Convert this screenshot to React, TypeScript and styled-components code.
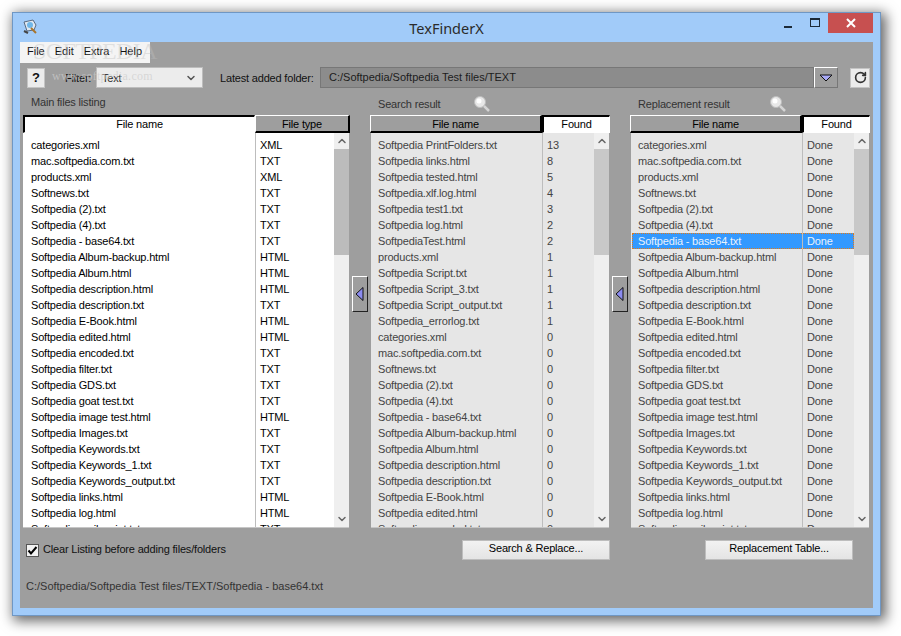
import React from 'react'
import styled, { createGlobalStyle } from 'styled-components'
import { ChevronUp, ChevronDown, RotateCw } from 'lucide-react'

const mainFiles: [string, string][] = [
  ['categories.xml', 'XML'], ['mac.softpedia.com.txt', 'TXT'], ['products.xml', 'XML'], ['Softnews.txt', 'TXT'],
  ['Softpedia (2).txt', 'TXT'], ['Softpedia (4).txt', 'TXT'], ['Softpedia - base64.txt', 'TXT'],
  ['Softpedia Album-backup.html', 'HTML'], ['Softpedia Album.html', 'HTML'], ['Softpedia description.html', 'HTML'],
  ['Softpedia description.txt', 'TXT'], ['Softpedia E-Book.html', 'HTML'], ['Softpedia edited.html', 'HTML'],
  ['Softpedia encoded.txt', 'TXT'], ['Softpedia filter.txt', 'TXT'], ['Softpedia GDS.txt', 'TXT'],
  ['Softpedia goat test.txt', 'TXT'], ['Softpedia image test.html', 'HTML'], ['Softpedia Images.txt', 'TXT'],
  ['Softpedia Keywords.txt', 'TXT'], ['Softpedia Keywords_1.txt', 'TXT'], ['Softpedia Keywords_output.txt', 'TXT'],
  ['Softpedia links.html', 'HTML'], ['Softpedia log.html', 'HTML'], ['Softpedia mail script.txt', 'TXT'],
]

const searchFiles: [string, string][] = [
  ['Softpedia PrintFolders.txt', '13'], ['Softpedia links.html', '8'], ['Softpedia tested.html', '5'],
  ['Softpedia.xlf.log.html', '4'], ['Softpedia test1.txt', '3'], ['Softpedia log.html', '2'],
  ['SoftpediaTest.html', '2'], ['products.xml', '1'], ['Softpedia Script.txt', '1'], ['Softpedia Script_3.txt', '1'],
  ['Softpedia Script_output.txt', '1'], ['Softpedia_errorlog.txt', '1'], ['categories.xml', '0'],
  ['mac.softpedia.com.txt', '0'], ['Softnews.txt', '0'], ['Softpedia (2).txt', '0'], ['Softpedia (4).txt', '0'],
  ['Softpedia - base64.txt', '0'], ['Softpedia Album-backup.html', '0'], ['Softpedia Album.html', '0'],
  ['Softpedia description.html', '0'], ['Softpedia description.txt', '0'], ['Softpedia E-Book.html', '0'],
  ['Softpedia edited.html', '0'], ['Softpedia encoded.txt', '0'],
]

const GlobalStyle = createGlobalStyle`
  html, body {
    margin: 0;
    background: #fff;
  }
  body {
    font-family: "Liberation Sans", Arial, sans-serif;
    font-size: 11px;
    letter-spacing: -0.18px;
  }
`

const Page = styled.div`
  width: 901px;
  height: 636px;
  padding: 12px 0 0 12px;
  box-sizing: border-box;
  overflow: hidden;
`

const Win = styled.div`
  width: 869px;
  height: 604px;
  box-sizing: border-box;
  border: 1px solid #6f97c4;
  background: #a1cbf9;
  box-shadow: 3px 3px 12px 2px rgba(0, 0, 0, 0.6);
  padding: 0 7px 7px 7px;
  display: flex;
  flex-direction: column;
`

const TitleBar = styled.div`
  height: 29px;
  flex: none;
  display: grid;
  grid-template-columns: 1fr auto 1fr;
`

const AppIcon = styled.svg`
  width: 16px;
  height: 16px;
  margin: 6px 0 0 2px;
`

const Title = styled.div`
  font-family: "Noto Sans", sans-serif;
  font-size: 14.5px;
  letter-spacing: 0;
  color: #2b2b2b;
  line-height: 30px;
`

const Controls = styled.div`
  display: flex;
  justify-content: flex-end;
  align-items: flex-start;
`

const CtrlBtn = styled.div<{ w: number }>`
  width: ${p => p.w}px;
  height: 20px;
  display: flex;
  align-items: center;
  justify-content: center;
`

const MinGlyph = styled.div`
  width: 8px;
  height: 2px;
  background: #1c2a38;
  margin-top: 8px;
`

const MaxGlyph = styled.div`
  width: 8px;
  height: 6px;
  border: 1px solid #1c2a38;
  border-top-width: 2px;
  margin-top: -1px;
`

const CloseBtn = styled(CtrlBtn)`
  background: #c75050;
  color: #fff;
`

const Client = styled.div`
  position: relative;
  flex: 1;
  background: #9e9e9e;
  color: #111;
  overflow: hidden;
`

const MenuBar = styled.div`
  width: 130px;
  height: 21px;
  background: #f4f4f4;
  display: flex;
  gap: 10px;
  align-items: center;
  padding: 0 0 4px 7px;
  box-sizing: border-box;
  letter-spacing: 0;
`

const Toolbar = styled.div`
  height: 21px;
  margin-top: 4px;
  display: flex;
  align-items: center;
  padding-left: 7px;
  white-space: nowrap;
`

const HelpBtn = styled.div`
  width: 18px;
  height: 20px;
  background: #ececec;
  border: 1px solid #c4c4c4;
  box-sizing: border-box;
  font-weight: bold;
  font-size: 13px;
  display: flex;
  align-items: center;
  justify-content: center;
`

const FilterLabel = styled.span`
  margin-left: 20px;
  width: 31px;
`

const SelectBox = styled.div`
  width: 107px;
  height: 21px;
  background: #ececec;
  border: 1px solid #bdbdbd;
  box-sizing: border-box;
  display: flex;
  align-items: center;
  justify-content: space-between;
  padding: 0 5px;
  color: #222;
`

const FolderLabel = styled.span`
  margin-left: 17px;
  width: 100px;
`

const PathField = styled.div`
  width: 494px;
  height: 21px;
  background: #8c8c8c;
  border: 1px solid #777;
  box-sizing: border-box;
  padding-left: 8px;
  line-height: 18px;
  color: #1c1c1c;
  letter-spacing: 0;
`

const PathDrop = styled.div`
  width: 24px;
  height: 21px;
  box-sizing: border-box;
  border-top: 1px solid #fff;
  border-left: 1px solid #fff;
  border-right: 1px solid #777;
  border-bottom: 1px solid #777;
  display: flex;
  align-items: center;
  justify-content: center;
`

const RefreshBtn = styled.div`
  width: 20px;
  height: 20px;
  margin-left: 12px;
  background: #ececec;
  border: 1px solid #c4c4c4;
  box-sizing: border-box;
  display: flex;
  align-items: center;
  justify-content: center;
  color: #333;
`

const Panels = styled.div`
  display: flex;
  padding-left: 3px;
`

const Panel = styled.div<{ w: number }>`
  width: ${p => p.w}px;
  flex: none;
`

const PanelLabel = styled.div<{ up?: boolean }>`
  height: 27px;
  box-sizing: border-box;
  padding: ${p => (p.up ? '8px' : '10px')} 0 0 8px;
  display: flex;
  color: #333;
`

const LabelText = styled.span<{ w?: number }>`
  width: ${p => (p.w ? `${p.w}px` : 'auto')};
`

const Lens = styled.svg`
  width: 18px;
  height: 18px;
  margin-top: -3px;
`

const HeaderRow = styled.div`
  display: flex;
  height: 18px;
`

const HeadCell = styled.div<{ w: number; active?: boolean }>`
  width: ${p => p.w}px;
  flex: none;
  box-sizing: border-box;
  text-align: center;
  line-height: 16px;
  color: #000;
  background: ${p => (p.active ? '#fff' : '#9e9e9e')};
  border-style: solid;
  border-width: 1px 2px 2px 1px;
  border-color: #fff #000 #000 #fff;
  ${p => p.active && 'border-width: 2px 1px 1px 2px; border-color: #000 #fff #fff #000; line-height: 14px;'}
`

const ListBody = styled.div<{ dim?: boolean; w: number }>`
  position: relative;
  width: ${p => p.w}px;
  height: 395px;
  box-sizing: border-box;
  margin-left: ${p => (p.dim ? 1 : 0)}px;
  background: ${p => (p.dim ? '#e6e6e6' : '#fff')};
  color: ${p => (p.dim ? '#444' : '#000')};
  border-bottom: 1px solid #c6c6c6;
  display: flex;
  overflow: hidden;
`

const Rows = styled.div`
  flex: 1;
  padding-top: 4px;
`

const Row = styled.div<{ selected?: boolean }>`
  display: flex;
  height: 16px;
  line-height: 16px;
  box-sizing: border-box;
  white-space: nowrap;
  ${p => p.selected && 'background: #3399ff; color: #e9f2fb; border: 1px dotted #e07b1a; line-height: 14px; margin-left: 1px;'}
`

const NameCell = styled.div<{ w: number; pad: number }>`
  width: ${p => p.w}px;
  flex: none;
  padding-left: ${p => p.pad}px;
  box-sizing: border-box;
  overflow: hidden;
`

const ValueCell = styled.div`
  flex: 1;
  padding-left: 5px;
`

const ColumnLine = styled.div<{ x: number }>`
  position: absolute;
  top: 0;
  bottom: 0;
  left: ${p => p.x}px;
  width: 1px;
  background: #bdbdbd;
`

const ScrollBar = styled.div`
  width: 15px;
  flex: none;
  background: #efefef;
  display: flex;
  flex-direction: column;
  align-items: center;
  color: #666;
  position: relative;
  z-index: 1;
`

const ScrollArrow = styled.span<{ end?: boolean }>`
  height: 16px;
  display: flex;
  align-items: center;
  justify-content: center;
  ${p => p.end && 'margin-top: auto;'}
`

const Thumb = styled.div<{ tone: string }>`
  width: 15px;
  height: 106px;
  background: ${p => p.tone};
`

const ArrowColumn = styled.div`
  width: 20px;
  flex: none;
  padding: 188px 0 0 2px;
  box-sizing: border-box;
`

const ArrowBtn = styled.div`
  width: 16px;
  height: 36px;
  box-sizing: border-box;
  border-top: 1px solid #fff;
  border-left: 1px solid #fff;
  border-right: 1px solid #222;
  border-bottom: 1px solid #222;
  display: flex;
  align-items: center;
  justify-content: flex-start;
  padding-left: 1px;
`

const Footer = styled.div`
  display: flex;
  height: 32px;
  padding-left: 6px;
  align-items: flex-start;
`

const CheckWrap = styled.label`
  width: 436px;
  flex: none;
  display: flex;
  gap: 4px;
  margin-top: 16px;
  line-height: 11px;
  color: #111;
`

const CheckBox = styled.div`
  width: 13px;
  height: 13px;
  box-sizing: border-box;
  background: #f2f2f2;
  border: 1px solid #555;
  display: flex;
  align-items: center;
  justify-content: center;
`

const FootBtn = styled.div<{ gap: number }>`
  width: 148px;
  height: 20px;
  flex: none;
  margin: 12px 0 0 ${p => p.gap}px;
  background: linear-gradient(#f2f2f2, #e4e4e4);
  border: 1px solid #bdbdbd;
  box-sizing: border-box;
  text-align: center;
  line-height: 14px;
  color: #000;
`

const Status = styled.div`
  margin: 20px 0 0 6px;
  color: #333;
  letter-spacing: 0;
`

const Watermark = styled.div`
  position: absolute;
  left: 13px;
  top: -4px;
  font-family: "Liberation Serif", serif;
  font-size: 24px;
  letter-spacing: -0.6px;
  color: rgba(190, 190, 190, 0.4);
  pointer-events: none;
  white-space: nowrap;
`

const WatermarkUrl = styled.div`
  position: absolute;
  left: 32px;
  top: 27px;
  font-family: "Liberation Serif", serif;
  font-size: 12px;
  letter-spacing: 0.3px;
  color: rgba(205, 205, 205, 0.7);
  pointer-events: none;
  white-space: nowrap;
`

const LeftTriangle = () => (
  <svg width="11" height="16" viewBox="0 0 11 16">
    <path d="M9 1.5 L2 8 L9 14.5 Z" fill="#8b8bf0" stroke="#111" strokeWidth="1" />
  </svg>
)

const LensIcon = () => (
  <Lens viewBox="0 0 18 18">
    <circle cx="7" cy="7" r="5.5" fill="#e8e8e8" stroke="#bdbdbd" />
    <circle cx="6" cy="6" r="2.5" fill="#fff" />
    <path d="M11 11 L16 16" stroke="#d4d4d4" strokeWidth="2.5" />
  </Lens>
)

const VScroll = ({ tone }: { tone: string }) => (
  <ScrollBar>
    <ScrollArrow><ChevronUp size={12} strokeWidth={3} /></ScrollArrow>
    <Thumb tone={tone} />
    <ScrollArrow end><ChevronDown size={12} strokeWidth={3} /></ScrollArrow>
  </ScrollBar>
)

interface ListProps {
  rows: [string, string][]
  width: number
  nameW: number
  pad: number
  dim?: boolean
  selected?: number
  tone: string
}

const FileList: React.FC<ListProps> = ({ rows, width, nameW, pad, dim, selected, tone }) => (
  <ListBody w={width} dim={dim}>
    <ColumnLine x={nameW} />
    <Rows>
      {rows.map((r, i) => (
        <Row key={r[0] + i} selected={selected === i}>
          <NameCell w={selected === i ? nameW - 2 : nameW} pad={selected === i ? pad - 2 : pad}>{r[0]}</NameCell>
          <ValueCell>{r[1]}</ValueCell>
        </Row>
      ))}
    </Rows>
    <VScroll tone={tone} />
  </ListBody>
)

const App: React.FC = () => {
  const done = mainFiles.map(f => [f[0], 'Done'] as [string, string])
  return (
    <Page>
      <GlobalStyle />
      <Win>
        <TitleBar>
          <AppIcon viewBox="0 0 16 16">
            <path d="M2 3 L11 1 L14 6 L12 11 L5 12 Z" fill="#dfe8f2" stroke="#5a6a80" />
            <circle cx="8" cy="6" r="3" fill="#6fb6e8" />
            <path d="M9 9 L14 14" stroke="#a8742c" strokeWidth="2" />
            <path d="M2 12 L6 14" stroke="#444" strokeWidth="2" />
          </AppIcon>
          <Title>TexFinderX</Title>
          <Controls>
            <CtrlBtn w={26}><MinGlyph /></CtrlBtn>
            <CtrlBtn w={27}><MaxGlyph /></CtrlBtn>
            <CloseBtn w={45}>
              <svg width="10" height="10" viewBox="0 0 10 10">
                <path d="M1 1 L9 9 M9 1 L1 9" stroke="#fff" strokeWidth="2" />
              </svg>
            </CloseBtn>
          </Controls>
        </TitleBar>
        <Client>
          <MenuBar>
            <span>File</span>
            <span>Edit</span>
            <span>Extra</span>
            <span>Help</span>
          </MenuBar>
          <Toolbar>
            <HelpBtn>?</HelpBtn>
            <FilterLabel>Filter:</FilterLabel>
            <SelectBox>
              Text
              <ChevronDown size={12} strokeWidth={3} color="#555" />
            </SelectBox>
            <FolderLabel>Latest added folder:</FolderLabel>
            <PathField>C:/Softpedia/Softpedia Test files/TEXT</PathField>
            <PathDrop>
              <svg width="14" height="8" viewBox="0 0 14 8">
                <path d="M1 1 H13 L7 7 Z" fill="#a9a9f5" stroke="#111" />
              </svg>
            </PathDrop>
            <RefreshBtn><RotateCw size={13} strokeWidth={3} /></RefreshBtn>
          </Toolbar>
          <Panels>
            <Panel w={327}>
              <PanelLabel up>Main files listing</PanelLabel>
              <HeaderRow>
                <HeadCell w={232} active>File name</HeadCell>
                <HeadCell w={95}>File type</HeadCell>
              </HeaderRow>
              <FileList rows={mainFiles} width={326} nameW={232} pad={8} tone="#bcbcbc" />
            </Panel>
            <ArrowColumn><ArrowBtn><LeftTriangle /></ArrowBtn></ArrowColumn>
            <Panel w={240}>
              <PanelLabel>
                <LabelText w={95}>Search result</LabelText>
                <LensIcon />
              </PanelLabel>
              <HeaderRow>
                <HeadCell w={172}>File name</HeadCell>
                <HeadCell w={68} active>Found</HeadCell>
              </HeaderRow>
              <FileList rows={searchFiles} width={238} nameW={171} pad={7} dim tone="#c8c8c8" />
            </Panel>
            <ArrowColumn><ArrowBtn><LeftTriangle /></ArrowBtn></ArrowColumn>
            <Panel w={240}>
              <PanelLabel>
                <LabelText w={131}>Replacement result</LabelText>
                <LensIcon />
              </PanelLabel>
              <HeaderRow>
                <HeadCell w={172}>File name</HeadCell>
                <HeadCell w={68} active>Found</HeadCell>
              </HeaderRow>
              <FileList rows={done} width={238} nameW={171} pad={7} dim selected={6} tone="#c8c8c8" />
            </Panel>
          </Panels>
          <Footer>
            <CheckWrap>
              <CheckBox>
                <svg width="11" height="11" viewBox="0 0 11 11">
                  <path d="M1.5 5.5 L4 8.5 L9.5 2" fill="none" stroke="#000" strokeWidth="2" />
                </svg>
              </CheckBox>
              Clear Listing before adding files/folders
            </CheckWrap>
            <FootBtn gap={0}>Search &amp; Replace...</FootBtn>
            <FootBtn gap={95}>Replacement Table...</FootBtn>
          </Footer>
          <Status>C:/Softpedia/Softpedia Test files/TEXT/Softpedia - base64.txt</Status>
          <Watermark>SOFTPEDIA</Watermark>
          <WatermarkUrl>www.softpedia.com</WatermarkUrl>
        </Client>
      </Win>
    </Page>
  )
}

export default App
